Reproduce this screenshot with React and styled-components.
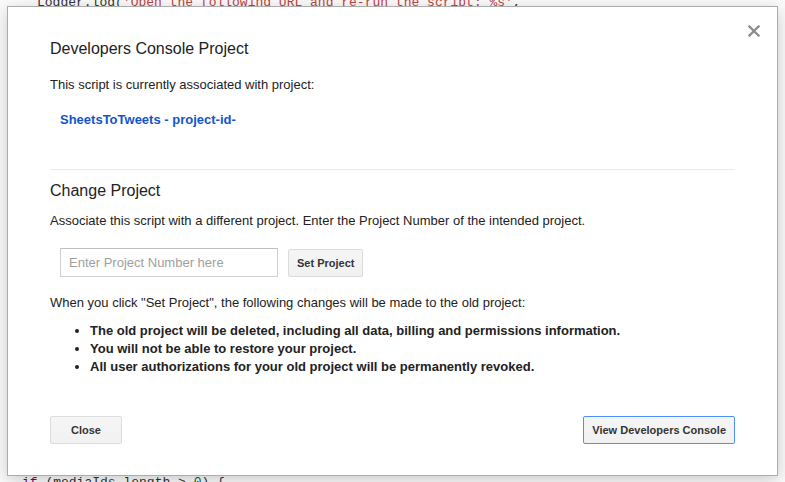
import React from "react";
import styled, { createGlobalStyle } from "styled-components";

const GlobalStyle = createGlobalStyle`
  html, body { margin: 0; padding: 0; background: #fbfbfb; }
  body { font-family: "Liberation Sans", Arial, sans-serif; }
`;

const Page = styled.div`
  position: relative;
  width: 785px;
  height: 482px;
  overflow: hidden;
  background: #fbfbfb;
`;

const Code = styled.div`
  display: flex;
  flex-direction: column;
  justify-content: space-between;
  height: 482px;
  font-family: "Liberation Mono", "Courier New", monospace;
  font-size: 13px;
  line-height: 16px;
  color: #333;
  white-space: pre;
`;

const CodeLine = styled.div`
  padding-left: ${(p) => p.$indent}px;
  margin-top: ${(p) => p.$mt || 0}px;
  margin-bottom: ${(p) => p.$mb || 0}px;
`;

const Str = styled.span`
  color: #b44;
`;
const Kw = styled.span`
  color: #708;
`;
const Num = styled.span`
  color: #164;
`;

const Dialog = styled.div`
  position: absolute;
  left: 7px;
  top: 6px;
  width: 771px;
  height: 470px;
  box-sizing: border-box;
  background: #fff;
  border: 1px solid #acacac;
  box-shadow: 0 4px 16px rgba(0, 0, 0, 0.2);
  padding: 32px 42px 31px 42px;
  display: flex;
  flex-direction: column;
  color: #222;
`;

const CloseX = styled.button`
  position: absolute;
  top: 17px;
  right: 16px;
  width: 14px;
  height: 14px;
  padding: 0;
  border: 0;
  background: transparent;
  cursor: pointer;
  display: flex;
  align-items: center;
  justify-content: center;
`;

const Title = styled.h2`
  margin: 0;
  font-size: 16px;
  line-height: 20px;
  font-weight: normal;
  color: #222;
  margin-top: ${(p) => p.$mt || 0}px;
`;

const Text = styled.p`
  margin: 0;
  font-size: 13px;
  line-height: 16px;
  margin-top: ${(p) => p.$mt || 0}px;
`;

const ProjectLink = styled.a`
  display: block;
  margin: 19px 0 0 10px;
  font-size: 13px;
  line-height: 16px;
  font-weight: bold;
  color: #1155cc;
  text-decoration: none;
`;

const Divider = styled.hr`
  margin: 41px 0 0 0;
  border: 0;
  height: 1px;
  background: #ebebeb;
`;

const InputRow = styled.div`
  display: flex;
  align-items: flex-start;
  gap: 10px;
  margin: 19px 0 0 10px;
`;

const Input = styled.input`
  box-sizing: border-box;
  width: 218px;
  height: 29px;
  border: 1px solid #d0d0d0;
  border-top-color: #c0c0c0;
  padding: 0 8px;
  font-family: "Liberation Sans", Arial, sans-serif;
  font-size: 13px;
  color: #222;
  outline: none;
  &::placeholder {
    color: #a0a0a0;
  }
`;

const Button = styled.button`
  box-sizing: border-box;
  height: 28px;
  min-width: ${(p) => (p.$wide ? 72 : 0)}px;
  margin-top: ${(p) => p.$mt || 0}px;
  padding: 0 8px;
  border: 1px solid ${(p) => (p.$focus ? "#4d90fe" : "#dcdcdc")};
  border-radius: 2px;
  background: linear-gradient(#f5f5f5, #f1f1f1);
  font-family: "Liberation Sans", Arial, sans-serif;
  font-size: 11px;
  font-weight: bold;
  color: #333;
  cursor: pointer;
`;

const List = styled.ul`
  margin: 11px 0 0 0;
  padding-left: 40px;
  font-size: 13px;
  line-height: 18px;
  font-weight: bold;
`;

const Footer = styled.div`
  margin-top: auto;
  display: flex;
  justify-content: space-between;
  align-items: center;
`;

export default function App() {
  return (
    <>
      <GlobalStyle />
      <Page>
        <Code>
          <CodeLine $indent={37} $mt={-5}>
            Logger.log(<Str>'Open the following URL and re-run the script: %s'</Str>,
          </CodeLine>
          <CodeLine $indent={22} $mb={-9}>
            <Kw>if</Kw> (mediaIds.length &gt; <Num>0</Num>) {"{"}
          </CodeLine>
        </Code>
        <Dialog role="dialog">
          <CloseX aria-label="Close">
            <svg width="12" height="12" viewBox="0 0 12 12">
              <path d="M1.5 1.5 L10.5 10.5 M10.5 1.5 L1.5 10.5" stroke="#8c8c8c" strokeWidth="2.3" strokeLinecap="square" />
            </svg>
          </CloseX>
          <Title>Developers Console Project</Title>
          <Text $mt={18}>This script is currently associated with project:</Text>
          <ProjectLink href="#">SheetsToTweets - project-id-</ProjectLink>
          <Divider />
          <Title $mt={11}>Change Project</Title>
          <Text $mt={12}>
            Associate this script with a different project. Enter the Project Number of the intended project.
          </Text>
          <InputRow>
            <Input placeholder="Enter Project Number here" />
            <Button $mt={1}>Set Project</Button>
          </InputRow>
          <Text $mt={18}>
            When you click "Set Project", the following changes will be made to the old project:
          </Text>
          <List>
            <li>The old project will be deleted, including all data, billing and permissions information.</li>
            <li>You will not be able to restore your project.</li>
            <li>All user authorizations for your old project will be permanently revoked.</li>
          </List>
          <Footer>
            <Button $wide>Close</Button>
            <Button $focus>View Developers Console</Button>
          </Footer>
        </Dialog>
      </Page>
    </>
  );
}
